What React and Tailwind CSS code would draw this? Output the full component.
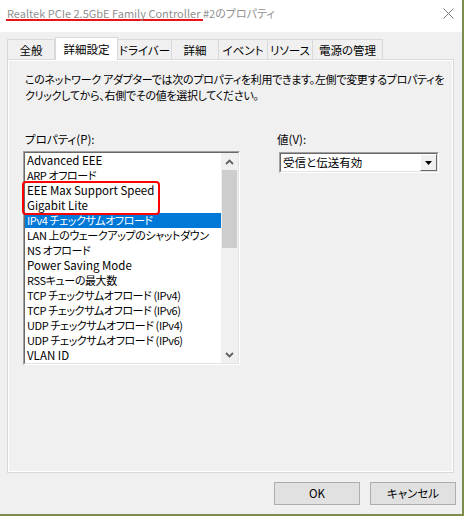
import React from "react";

const font = "font-['Noto_Sans_CJK_JP','Noto_Sans',sans-serif] [font-feature-settings:'palt']";

const tabs = [
  { label: "全般", w: "w-[48px]" },
  { label: "詳細設定", w: "w-[63px]", active: true },
  { label: "ドライバー", w: "w-[54px]" },
  { label: "詳細", w: "w-[47px]" },
  { label: "イベント", w: "w-[49px]" },
  { label: "リソース", w: "w-[45px]" },
  { label: "電源の管理", w: "w-[70px]" },
];

const properties = [
  "Advanced EEE",
  "ARP オフロード",
  "EEE Max Support Speed",
  "Gigabit Lite",
  "IPv4 チェックサムオフロード",
  "LAN 上のウェークアップのシャットダウン",
  "NS オフロード",
  "Power Saving Mode",
  "RSSキューの最大数",
  "TCP チェックサムオフロード (IPv4)",
  "TCP チェックサムオフロード (IPv6)",
  "UDP チェックサムオフロード (IPv4)",
  "UDP チェックサムオフロード (IPv6)",
  "VLAN ID",
];

const hasKana = (s) => /[\u3040-\u30ff]/.test(s);

const Chevron = ({ up }) => (
  <svg width="9" height="6" viewBox="0 0 9 6">
    <path
      d={up ? "M1 5 L4.5 1.5 L8 5" : "M1 1 L4.5 4.5 L8 1"}
      fill="none"
      stroke="#606060"
      strokeWidth="1.8"
    />
  </svg>
);

const App = () => {
  return (
    <div className={`w-[464px] h-[516px] bg-[#f0f0f0] border-r-2 border-b-2 border-[#7d8d4b] flex flex-col text-[11.5px] text-black ${font}`}>
      {/* Title bar */}
      <div className="h-[32px] bg-white flex items-start justify-between pl-[6px] pr-[8px] pt-[7px] shrink-0">
        <div className="text-[#8f8f8f] text-[11px] leading-[12px] whitespace-nowrap">
          <span className="inline-block border-b-2 border-[#e8141c] pl-px">
            Realtek PCIe 2.5GbE Family Controller&nbsp;
          </span>
          <span>#2のプロパティ</span>
        </div>
        <svg width="11" height="11" viewBox="0 0 11 11" className="mt-px">
          <path d="M0.5 0.5 L10.5 10.5 M10.5 0.5 L0.5 10.5" stroke="#7a7a7a" strokeWidth="1" />
        </svg>
      </div>

      {/* Tabs */}
      <div className="flex items-end h-[22px] mt-[5px] ml-[7px] shrink-0">
        {tabs.map((t, i) =>
          t.active ? (
            <div
              key={t.label}
              className={`${t.w} h-[23px] -mb-px relative z-10 bg-white border border-b-0 border-[#d9d9d9] flex items-center justify-center leading-[15px] whitespace-nowrap`}
            >
              {t.label}
            </div>
          ) : (
            <div
              key={t.label}
              className={`${t.w} h-[20px] border-t border-r ${i === 0 ? "border-l" : ""} border-[#d9d9d9] flex items-center justify-center leading-[15px] pt-px whitespace-nowrap`}
            >
              {t.label}
            </div>
          )
        )}
      </div>

      {/* Panel */}
      <div className="flex-1 ml-[7px] mr-[8px] border border-[#d9d9d9] relative">
        <div className="h-full border border-white pl-[16px] pt-[10px]">
          <p className="text-[11px] tracking-[-0.3px] leading-[16px] whitespace-nowrap">
            このネットワーク アダプターでは次のプロパティを利用できます。左側で変更するプロパティを
            <br />
            クリックしてから、右側でその値を選択してください。
          </p>

          <div className="flex mt-[29px]">
            {/* Property list */}
            <div className="w-[215px]">
              <div className="leading-[15px]">プロパティ(P):</div>
              <div className="relative -ml-[2px] mt-[4px] w-[217px] border border-t-[#a0a0a0] border-l-[#a0a0a0] border-r-white border-b-white">
                <div className="border border-t-[#696969] border-l-[#696969] border-r-[#e3e3e3] border-b-[#e3e3e3] bg-white flex">
                  <div className="flex-1 overflow-hidden">
                    {properties.map((p, i) => (
                      <div
                        key={p}
                        className={`h-[15px] leading-[15px] pl-[2px] whitespace-nowrap ${
                          hasKana(p) ? "text-[11px] tracking-[-0.4px]" : ""
                        } ${i === 4 ? "bg-[#0078d7] text-white" : ""}`}
                      >
                        {p}
                      </div>
                    ))}
                  </div>
                  {/* Scrollbar */}
                  <div className="w-[17px] bg-[#f0f0f0] flex flex-col">
                    <div className="h-[17px] flex items-center justify-center">
                      <Chevron up />
                    </div>
                    <div className="h-[78px] mx-px bg-[#cdcdcd]" />
                    <div className="flex-1" />
                    <div className="h-[17px] flex items-center justify-center">
                      <Chevron />
                    </div>
                  </div>
                </div>
                {/* Red annotation */}
                <div className="absolute left-[-2px] top-[29px] w-[138px] h-[34px] border-[2.5px] border-[#f00] rounded-[4px] pointer-events-none" />
              </div>
            </div>

            {/* Value */}
            <div className="ml-[37px]">
              <div className="leading-[15px]">値(V):</div>
              <div className="ml-[2px] mt-[5px] w-[160px] h-[21px] border border-t-[#a0a0a0] border-l-[#a0a0a0] border-r-white border-b-white">
                <div className="h-full border border-t-[#696969] border-l-[#696969] border-r-[#e3e3e3] border-b-[#e3e3e3] bg-white flex">
                  <div className="flex-1 pl-[2px] leading-[17px]">受信と伝送有効</div>
                  <div className="w-[17px] h-full bg-[#f0f0f0] border border-t-white border-l-white border-r-[#696969] border-b-[#696969] flex items-center justify-center">
                    <svg width="7" height="4" viewBox="0 0 7 4">
                      <path d="M0 0 H7 L3.5 4 Z" fill="#000" />
                    </svg>
                  </div>
                </div>
              </div>
            </div>
          </div>
        </div>
      </div>

      {/* Buttons */}
      <div className="flex justify-end gap-[10px] mt-[9px] mb-[9px] mr-[6px] shrink-0">
        <button className="w-[86px] h-[23px] bg-[#e1e1e1] border border-[#adadad] leading-[15px]">
          OK
        </button>
        <button className="w-[86px] h-[23px] bg-[#e1e1e1] border border-[#adadad] leading-[15px]">
          キャンセル
        </button>
      </div>
    </div>
  );
};

export default App;
